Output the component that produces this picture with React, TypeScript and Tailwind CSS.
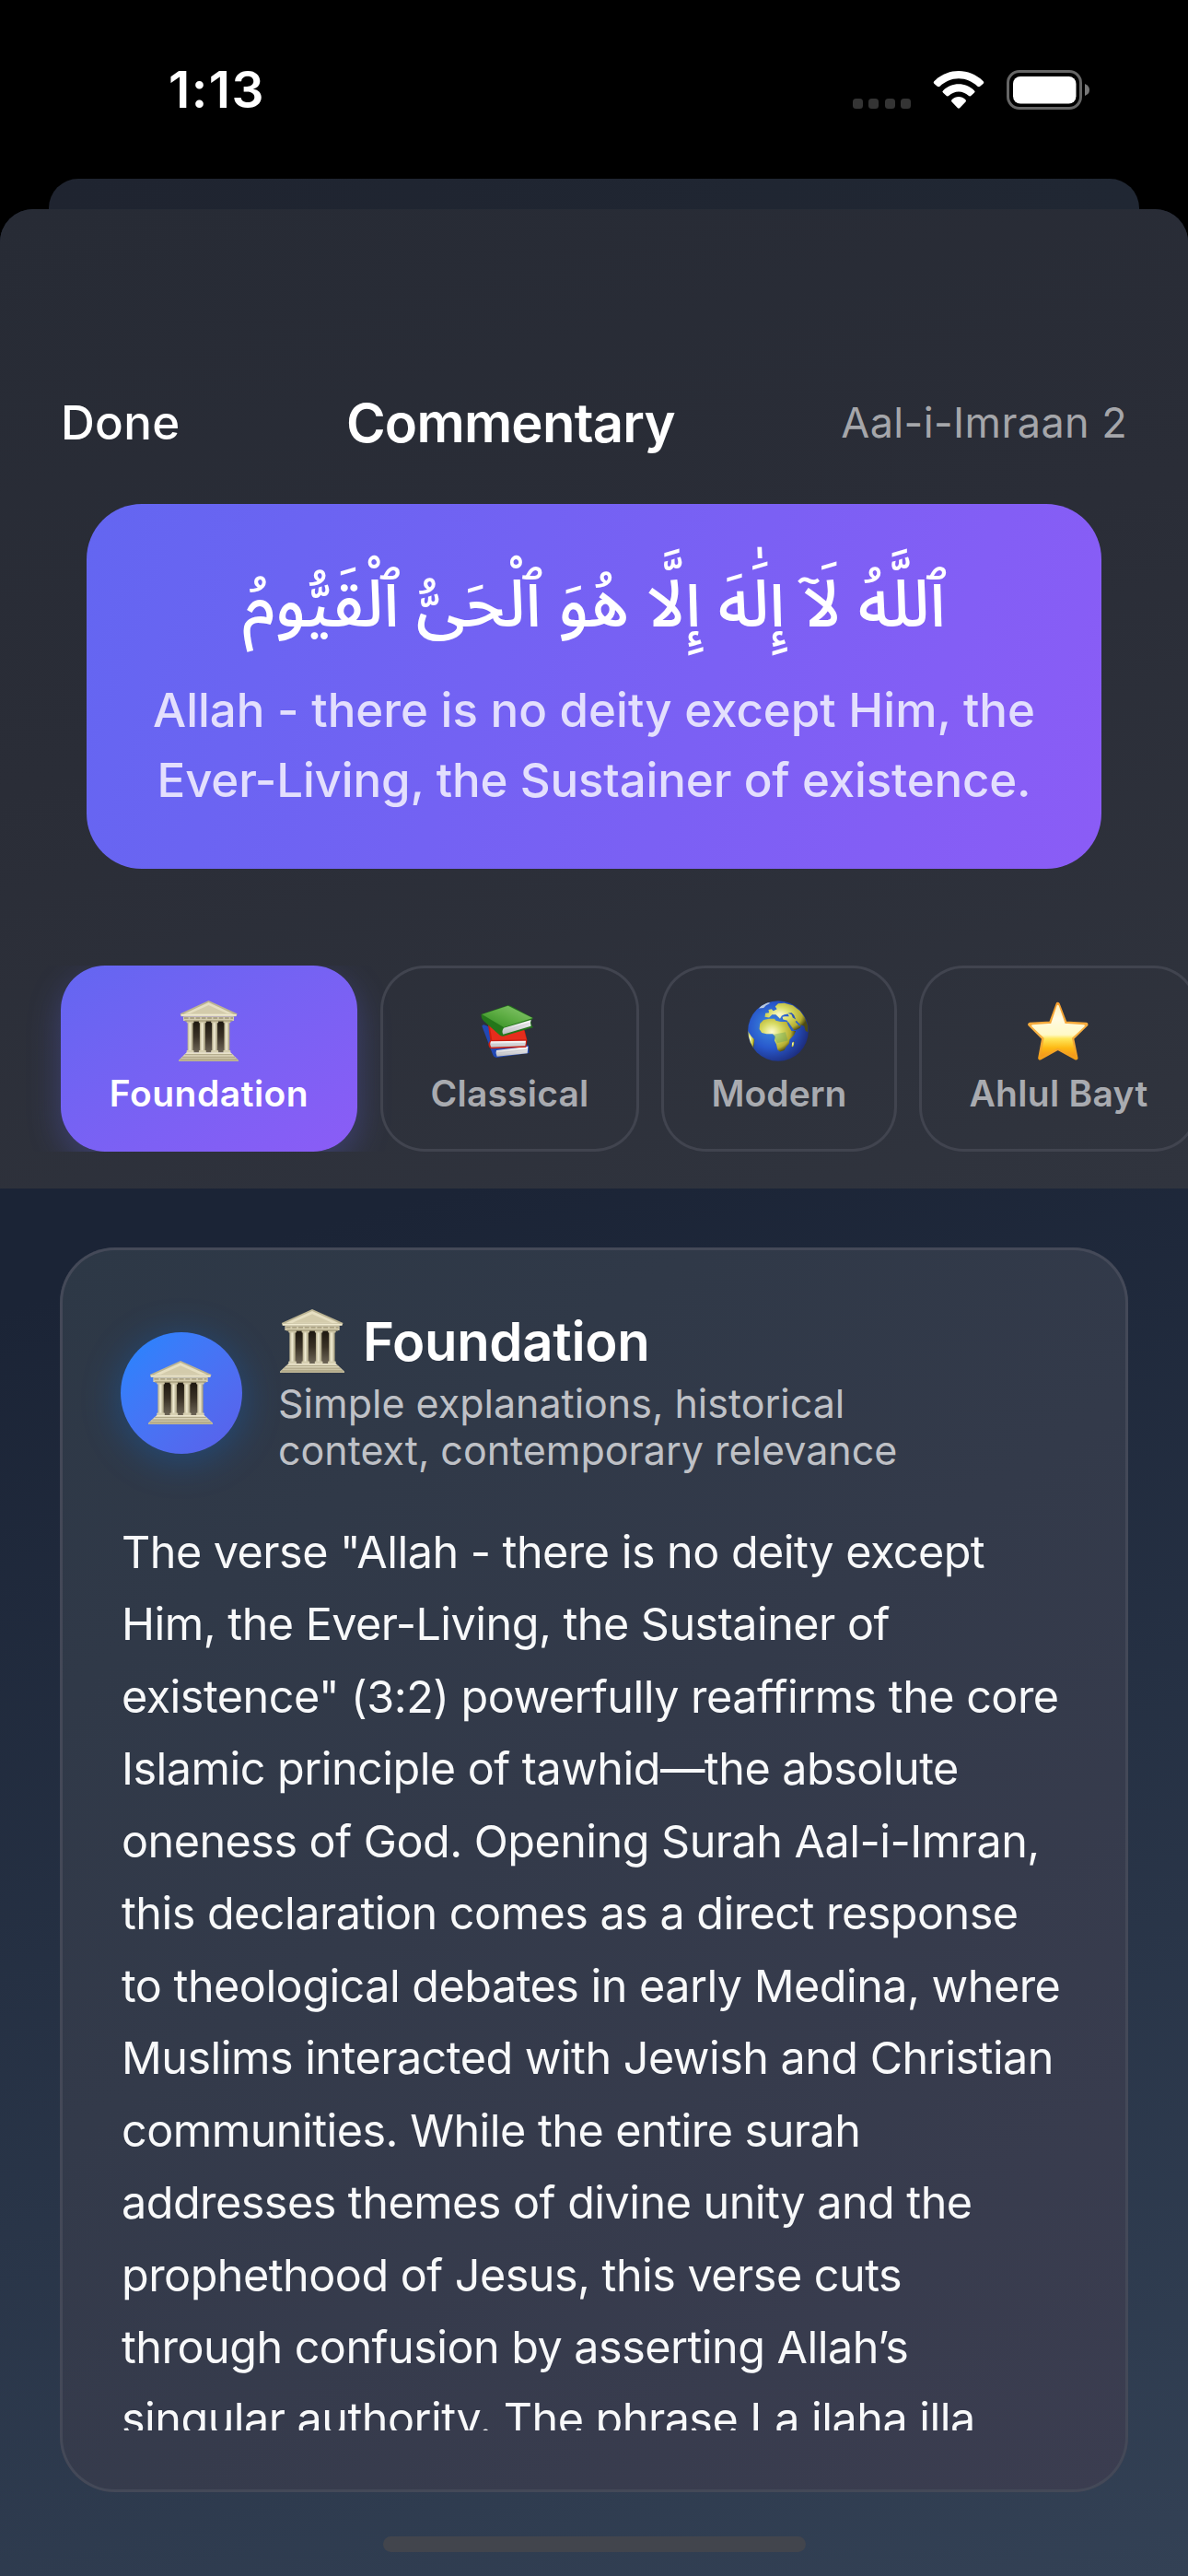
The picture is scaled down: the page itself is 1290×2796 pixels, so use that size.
import type { ReactNode } from 'react';

function Temple({ className }: { className: string }) {
  return (
    <svg viewBox="0 0 196 198" className={className} preserveAspectRatio="none" aria-hidden="true">
      <defs>
        <linearGradient id="t-col" x1="0" x2="1" y1="0" y2="0">
          <stop offset="0" stopColor="#b5ad8c" />
          <stop offset="0.45" stopColor="#f1ecd3" />
          <stop offset="1" stopColor="#a09878" />
        </linearGradient>
        <linearGradient id="t-gap" x1="0" x2="0" y1="0" y2="1">
          <stop offset="0" stopColor="#1c170f" />
          <stop offset="0.5" stopColor="#3a3226" />
          <stop offset="1" stopColor="#6f6758" />
        </linearGradient>
        <linearGradient id="t-base" x1="0" x2="0" y1="0" y2="1">
          <stop offset="0" stopColor="#efe9d0" />
          <stop offset="1" stopColor="#b9b191" />
        </linearGradient>
      </defs>
      <rect x="36" y="66" width="124" height="104" fill="url(#t-gap)" />
      {[28, 68, 108, 148].map((x) => (
        <g key={x}>
          <rect x={x + 1} y="70" width="18" height="98" fill="url(#t-col)" />
          <rect x={x - 2} y="66" width="24" height="7" rx="2" fill="#cdc5a5" />
          <rect x={x - 2} y="162" width="24" height="8" rx="2" fill="#d6cfb1" />
        </g>
      ))}
      <path d="M98 0 L192 43 L188 52 L8 52 L5 43 Z" fill="#bcb493" />
      <path d="M98 6 L180 44 L16 44 Z" fill="#e6dfc2" />
      <path d="M98 15 L158 42 L38 42 Z" fill="#d3cbab" />
      <path d="M8 45 H189 V50 H8 Z" fill="#f0ead1" />
      <rect x="15" y="52" width="166" height="14" fill="#d5cdae" />
      <path d="M18 57 H178" stroke="#9d9474" strokeWidth="4" strokeDasharray="14 5" />
      <rect x="20" y="64" width="156" height="4" fill="#a79e7d" />
      <path d="M26 169 H170 L196 194 V198 H0 V194 Z" fill="url(#t-base)" />
      <path d="M20 176 H176 M12 184 H184 M5 192 H191" stroke="#a39a79" strokeWidth="2.5" />
    </svg>
  );
}

function Books() {
  return (
    <svg viewBox="0 0 192 216" className="mr-[5px] h-[72px] w-16" aria-hidden="true">
      <defs>
        <linearGradient id="b-green" x1="0" x2="1" y1="1" y2="0">
          <stop offset="0" stopColor="#2f8a1f" />
          <stop offset="0.5" stopColor="#5fae45" />
          <stop offset="1" stopColor="#8cc873" />
        </linearGradient>
        <linearGradient id="b-page" x1="0" x2="0" y1="0" y2="1">
          <stop offset="0" stopColor="#ffffff" />
          <stop offset="1" stopColor="#b9b9bd" />
        </linearGradient>
      </defs>
      <path d="M13 92 Q16 86 24 89 L150 150 L165 156 L166 180 L60 195 Q52 195 49 187 Z" fill="#2148b4" />
      <path d="M60 171 L163 158 L161 181 L62 191 Q56 182 60 171 Z" fill="url(#b-page)" />
      <path d="M61 180 L160 169" stroke="#c3c3c8" strokeWidth="2" />
      <path d="M33 88 L152 106 L160 137 L157 161 L44 166 Q35 164 34 150 L40 138 Z" fill="#c81e12" />
      <path d="M38 90 L150 106 L158 136 L46 138 Z" fill="#e62d1c" />
      <path d="M42 142 L156 140 L154 157 L43 161 Q37 152 42 142 Z" fill="url(#b-page)" />
      <path d="M42 151 L155 149" stroke="#c3c3c8" strokeWidth="2" />
      <path d="M10 54 L96 25 Q102 24 106 26 L180 66 L172 74 L176 93 L181 96 L82 125 Q74 126 70 121 L18 75 Q10 66 10 54 Z" fill="#24761a" />
      <path d="M13 54 L98 26 L178 66 L84 96 Z" fill="url(#b-green)" />
      <path d="M84 98 L173 72 Q168 82 173 92 L82 119 Q76 108 84 98 Z" fill="url(#b-page)" />
      <path d="M81 109 L170 82" stroke="#c9c9cc" strokeWidth="2" />
    </svg>
  );
}

function Globe() {
  return (
    <svg viewBox="0 0 100 100" className="mr-[3px] size-[66px]" aria-hidden="true">
      <defs>
        <radialGradient id="g-sea" cx="0.38" cy="0.42" r="0.66">
          <stop offset="0" stopColor="#3f8ee0" />
          <stop offset="0.55" stopColor="#2858cc" />
          <stop offset="1" stopColor="#1c2a78" />
        </radialGradient>
        <radialGradient id="g-land" cx="0.34" cy="0.4" r="0.65">
          <stop offset="0" stopColor="#fdfbd0" />
          <stop offset="0.4" stopColor="#d8dc66" />
          <stop offset="0.8" stopColor="#b5ad30" />
          <stop offset="1" stopColor="#4d4a14" />
        </radialGradient>
        <clipPath id="g-clip">
          <circle cx="50" cy="50" r="49.5" />
        </clipPath>
      </defs>
      <circle cx="50" cy="50" r="49.8" fill="url(#g-sea)" />
      <g clipPath="url(#g-clip)" fill="url(#g-land)">
        <path d="M20 38 L26 32 L35 30 L44 30 L46 33 L54 35 L64 35 L67 42 L72 50 L79 50 L76 57 L69 64 L68 71 L63 76 L60 82 L53 84 L49 81 L47 72 L44 66 L45 59 L41 55 L31 55 L23 53 L19 47 Z" />
        <path d="M28 27 L29 21 L35 20 L34 15 L39 14 L42 17 L48 14 L45 10 L50 5 L60 4 L74 8 L86 17 L94 28 L99 42 L99 52 L95 50 L93 42 L88 40 L86 45 L80 48 L74 49 L67 38 L65 33 L58 31 L57 27 L61 26 L68 26 L66 22 L60 23 L56 25 L53 30 L50 27 L46 23 L40 23 L35 28 Z" />
        <path d="M0 50 L6 59 L11 64 L10 74 L9 82 L0 70 Z" />
        <path d="M73 69 L77 67 L75 75 L72 77 Z" />
        <path d="M18 13 L24 7 L33 3 L37 4 L30 8 L26 12 Z" fill="#b9c8dd" />
      </g>
      <path d="M66 21 L72 23 L74 28 L79 31 L76 24 L72 20 Z" fill="#2b55b8" />
      <path d="M66 36 L75 49" stroke="#2a5fc8" strokeWidth="2" />
      <path d="M79 34 L86 41" stroke="#2a5fc8" strokeWidth="2.5" />
      <path d="M41 56 L62 52 L66 66 L48 70 Z" fill="#4f9e5c" opacity="0.35" />
    </svg>
  );
}

function Star() {
  return (
    <svg viewBox="0 0 198 190" className="mr-[2px] h-[64px] w-[66px]" aria-hidden="true">
      <defs>
        <linearGradient id="s-fill" x1="0" x2="0" y1="0" y2="1">
          <stop offset="0" stopColor="#fff3c4" />
          <stop offset="0.25" stopColor="#fffbe2" />
          <stop offset="0.58" stopColor="#fff9c6" />
          <stop offset="0.66" stopColor="#ffe75a" />
          <stop offset="0.85" stopColor="#fdb813" />
          <stop offset="1" stopColor="#f59a1c" />
        </linearGradient>
        <linearGradient id="s-edge" x1="0" x2="0" y1="0" y2="1">
          <stop offset="0" stopColor="#f6a030" />
          <stop offset="0.55" stopColor="#f6b043" />
          <stop offset="1" stopColor="#f3a01b" />
        </linearGradient>
      </defs>
      <path
        d="M98 8 L122 70 L190 74 L144 119 L157 183 L98 151 L40 183 L52 119 L7 74 L75 70 Z"
        fill="url(#s-edge)"
        stroke="url(#s-edge)"
        strokeWidth="13"
        strokeLinejoin="round"
      />
      <path
        d="M98 14 L119 74 L182 78 L140 117 L151 175 L98 147 L46 175 L57 117 L16 78 L78 74 Z"
        fill="url(#s-fill)"
        stroke="url(#s-fill)"
        strokeWidth="7"
        strokeLinejoin="round"
      />
    </svg>
  );
}

function StatusBar() {
  return (
    <div className="flex h-[194px] items-center justify-between pr-[107px] pl-[183px]">
      <div className="text-[55px] leading-[66px] font-semibold tracking-[1.5px]">1:13</div>
      <div className="flex h-[43px] items-end">
        <div className="mb-px flex gap-[6.4px]">
          {[0, 1, 2, 3].map((dot) => (
            <span key={dot} className="size-[11px] rounded-[3.5px] bg-[#343434]" />
          ))}
        </div>
        <svg viewBox="0 0 166 124" className="mb-px ml-[24px] h-[41px] w-[56px]" fill="#fff" aria-hidden="true">
          <path d="M3 33 C26 11 54 0 83 0 C112 0 140 11 163 33 Q168 38 163 42 L153 51 Q149 54 145 51 C128 34 106 25 83 25 C60 25 38 34 21 51 Q17 54 13 51 L3 42 Q-2 38 3 33 Z" />
          <path d="M32 64 C46 50 64 43 83 43 C102 43 120 50 134 64 Q139 68 134 72 L124 81 Q120 85 115 81 C106 73 95 68 83 68 C71 68 60 73 51 81 Q46 85 42 81 L32 72 Q27 68 32 64 Z" />
          <path d="M61 94 C67 88 75 85 83 85 C91 85 99 88 105 94 Q109 98 105 102 L87 121 Q83 125 79 121 L61 102 Q57 98 61 94 Z" />
        </svg>
        <svg viewBox="0 0 90 43" className="ml-[24px] h-[43px] w-[90px]" aria-hidden="true">
          <rect x="1.5" y="1.5" width="79" height="40" rx="12.5" fill="none" stroke="#666" strokeWidth="3" />
          <rect x="7" y="7" width="68.5" height="29.5" rx="8" fill="#fff" />
          <path d="M85 15 Q90 17 90 21.5 Q90 26 85 28 Z" fill="#777" />
        </svg>
      </div>
    </div>
  );
}

function Tab({ className, label, children }: { className: string; label: string; children: ReactNode }) {
  return (
    <button className={`flex shrink-0 flex-col items-center rounded-[48px] text-[39px] leading-[47px] font-semibold ${className}`}>
      <span className="mt-[34px] flex h-[74px] items-center justify-center">{children}</span>
      <span className="mt-[7px]">{label}</span>
    </button>
  );
}

const passage = [
  'The verse "Allah - there is no deity except',
  'Him, the Ever-Living, the Sustainer of',
  'existence" (3:2) powerfully reaffirms the core',
  'Islamic principle of tawhid—the absolute',
  'oneness of God. Opening Surah Aal-i-Imran,',
  'this declaration comes as a direct response',
  'to theological debates in early Medina, where',
  'Muslims interacted with Jewish and Christian',
  'communities. While the entire surah',
  'addresses themes of divine unity and the',
  'prophethood of Jesus, this verse cuts',
  'through confusion by asserting Allah’s',
  'singular authority. The phrase La ilaha illa',
];

export default function App() {
  return (
    <div className="flex h-[2796px] w-[1290px] flex-col overflow-hidden bg-black font-['Inter',sans-serif] text-white">
      <StatusBar />
      <div className="mx-[53px] h-[33px] shrink-0 rounded-t-[32px] bg-linear-to-r from-[#1f2430] to-[#202733]" />

      <main className="flex flex-1 flex-col overflow-hidden rounded-t-[36px] bg-[linear-gradient(165deg,#1b2436_41%,#334155_100%)]">
        <header className="flex h-[1063px] shrink-0 flex-col bg-[linear-gradient(165deg,#272b35_0%,#2a2d37_45%,#30343e_100%)]">
          <div className="mt-[202px] flex h-[60px] items-center justify-between px-[66px]">
            <button className="text-[51px] font-medium tracking-[0.3px]">Done</button>
            <h1 className="text-[58px] font-semibold tracking-[-0.75px]">Commentary</h1>
            <span className="text-[45px] tracking-[0.4px] text-[#a5a6aa]">Aal-i-Imraan 2</span>
          </div>

          <section className="mx-[94px] mt-[58px] flex h-[396px] flex-col items-center rounded-[60px] bg-[linear-gradient(110deg,#6366f1_0%,#8b5cf6_100%)]">
            <p
              dir="rtl"
              lang="ar"
              className="mt-[45px] h-[141px] whitespace-nowrap font-['Noto_Sans_Arabic','DejaVu_Sans',sans-serif] text-[71px] leading-[130px] font-medium"
            >
              ٱللَّهُ لَآ إِلَٰهَ إِلَّا هُوَ ٱلْحَىُّ ٱلْقَيُّومُ
            </p>
            <p className="text-center text-[51px] leading-[76.3px] font-medium whitespace-nowrap text-[#e3dffd]">
              Allah - there is no deity except Him, the
              <br />
              <span className="tracking-[-0.15px]">Ever-Living, the Sustainer of existence.</span>
            </p>
          </section>

          <nav className="mt-[105px] flex h-[202px] gap-6 overflow-hidden pl-[66px]">
            <Tab
              label="Foundation"
              className="mr-px w-[322px] bg-linear-to-br from-[#6366f1] to-[#8b5cf6] tracking-[0.5px] shadow-[0_12px_36px_rgba(99,102,241,0.3)]"
            >
              <Temple className="mr-[2px] h-[66px] w-[65px]" />
            </Tab>
            <Tab label="Classical" className="w-[281px] tracking-[0.2px] text-[#a9abb0] inset-ring-[3px] inset-ring-[#41444f]">
              <Books />
            </Tab>
            <Tab label="Modern" className="w-[256px] text-[#a9abb0] inset-ring-[3px] inset-ring-[#41444f]">
              <Globe />
            </Tab>
            <Tab label="Ahlul Bayt" className="w-[303px] tracking-[0.3px] text-[#a9abb0] inset-ring-[3px] inset-ring-[#41444f]">
              <Star />
            </Tab>
          </nav>
        </header>

        <article className="mx-[65px] mt-16 flex h-[1351px] shrink-0 flex-col rounded-[60px] bg-[linear-gradient(145deg,#2d3846_0%,#333a4a_45%,#3b3d50_100%)] px-[66px] pt-[66px] inset-ring-[3px] inset-ring-[#444958]">
          <div className="flex h-[180px] items-center">
            <div className="mt-[3px] flex size-[132px] shrink-0 items-center justify-center rounded-full bg-linear-to-br from-[#1e86ff] to-[#5b5fe9] shadow-[0_6px_44px_rgba(0,122,255,0.3)]">
              <Temple className="mr-[2px] h-[69px] w-[70px]" />
            </div>
            <div className="ml-[39px]">
              <h2 className="flex h-[78px] items-center pb-[6px] text-[58px] leading-[72px] font-semibold tracking-[-0.3px]">
                <Temple className="mr-[20px] ml-[2px] h-[69px] w-[70px]" />
                Foundation
              </h2>
              <p className="text-[43px] leading-[51.2px] whitespace-nowrap text-[#bfc1c6]">
                Simple explanations, historical
                <br />
                context, contemporary relevance
              </p>
            </div>
          </div>
          <div className="mt-[46px] h-[992px] overflow-hidden pl-px text-[48.5px] leading-[78.45px] tracking-[-0.52px] whitespace-nowrap text-[#f8f9fa]">
            {passage.map((line) => (
              <div key={line}>{line}</div>
            ))}
          </div>
        </article>

        <div className="mx-auto mt-12 h-[17px] w-[459px] shrink-0 rounded-full bg-[#42454d]" />
      </main>
    </div>
  );
}
